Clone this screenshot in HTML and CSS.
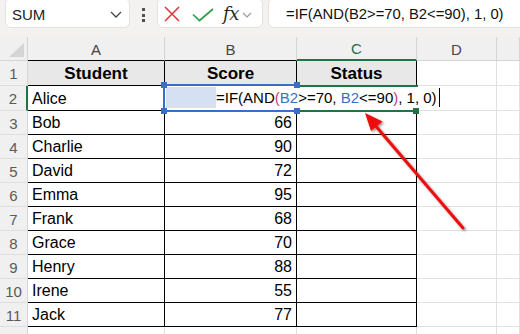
FILE: index.html
```html
<!DOCTYPE html>
<html>
<head>
<meta charset="utf-8">
<link rel="stylesheet" href="styles.css">
</head>
<body>
<div class="app">
  <div class="bar">
    <div class="namebox">
      <span class="name">SUM</span>
      <svg class="chev" width="12" height="7" viewBox="0 0 12 7"><path d="M1 1 L6 6 L11 1" fill="none" stroke="#444" stroke-width="1.3"/></svg>
    </div>
    <div class="dots"><i></i><i></i><i></i></div>
    <div class="fxbox">
      <svg class="ico-x" width="16" height="16" viewBox="0 0 16 16"><path d="M1 1 L15 15 M15 1 L1 15" stroke="#e0393e" stroke-width="1.6" fill="none"/></svg>
      <svg class="ico-ok" width="22" height="14" viewBox="0 0 22 14"><path d="M1 6.5 L7.5 12.5 L21 1" stroke="#2e9e4b" stroke-width="1.7" fill="none"/></svg>
      <span class="fx">fx</span>
      <svg class="ico-dd" width="10" height="6" viewBox="0 0 10 6"><path d="M1 1 L5 5 L9 1" stroke="#9a9a9a" stroke-width="1.2" fill="none"/></svg>
    </div>
    <div class="formula">=IF(AND(B2&gt;=70, B2&lt;=90), 1, 0)</div>
  </div>

  <div class="sheet">
    <div class="grid">
      <div class="ch corner"><span class="tri"></span></div>
      <div class="ch dk">A</div>
      <div class="ch dk">B</div>
      <div class="ch sel">C</div>
      <div class="ch">D</div>
      <div class="ch"></div>

      <div class="rh">1</div>
      <div class="c t hd">Student</div>
      <div class="c t hd">Score</div>
      <div class="c t hd">Status</div>
      <div class="c g"></div>
      <div class="c g"></div>

      <div class="rh act">2</div>
      <div class="c t">Alice</div>
      <div class="c t num"></div>
      <div class="c t"></div>
      <div class="c g"></div>
      <div class="c g"></div>

      <div class="rh">3</div>
      <div class="c t">Bob</div>
      <div class="c t num">66</div>
      <div class="c t"></div>
      <div class="c g"></div>
      <div class="c g"></div>

      <div class="rh">4</div>
      <div class="c t">Charlie</div>
      <div class="c t num">90</div>
      <div class="c t"></div>
      <div class="c g"></div>
      <div class="c g"></div>

      <div class="rh">5</div>
      <div class="c t">David</div>
      <div class="c t num">72</div>
      <div class="c t"></div>
      <div class="c g"></div>
      <div class="c g"></div>

      <div class="rh">6</div>
      <div class="c t">Emma</div>
      <div class="c t num">95</div>
      <div class="c t"></div>
      <div class="c g"></div>
      <div class="c g"></div>

      <div class="rh">7</div>
      <div class="c t">Frank</div>
      <div class="c t num">68</div>
      <div class="c t"></div>
      <div class="c g"></div>
      <div class="c g"></div>

      <div class="rh">8</div>
      <div class="c t">Grace</div>
      <div class="c t num">70</div>
      <div class="c t"></div>
      <div class="c g"></div>
      <div class="c g"></div>

      <div class="rh">9</div>
      <div class="c t">Henry</div>
      <div class="c t num">88</div>
      <div class="c t"></div>
      <div class="c g"></div>
      <div class="c g"></div>

      <div class="rh">10</div>
      <div class="c t">Irene</div>
      <div class="c t num">55</div>
      <div class="c t"></div>
      <div class="c g"></div>
      <div class="c g"></div>

      <div class="rh">11</div>
      <div class="c t">Jack</div>
      <div class="c t num">77</div>
      <div class="c t"></div>
      <div class="c g"></div>
      <div class="c g"></div>

      <div class="rh">12</div>
      <div class="c g"></div>
      <div class="c g"></div>
      <div class="c g"></div>
      <div class="c g"></div>
      <div class="c g"></div>
    </div>

    <div class="edit">
      <div class="refbox"></div>
      <div class="reffill"></div>
      <div class="gline top"></div>
      <div class="gline bottom"></div>
      <div class="etext">=IF(AND<span class="p1">(</span><span class="r1">B2</span>&gt;=70, <span class="r1">B2</span>&lt;=90<span class="p1">)</span>, 1, 0)<span class="caret"></span></div>
      <i class="h hb tl"></i><i class="h hb bl"></i><i class="h hb tr"></i><i class="h hb br"></i>
      <i class="h hg"></i>
    </div>

    <svg class="arrow" width="520" height="297" viewBox="0 37 520 297">
      <defs>
        <filter id="sh" x="-20%" y="-20%" width="140%" height="140%">
          <feDropShadow dx="1.5" dy="1.5" stdDeviation="1" flood-color="#000" flood-opacity="0.45"/>
        </filter>
      </defs>
      <g filter="url(#sh)">
        <line x1="463" y1="228" x2="374" y2="124" stroke="#ee1111" stroke-width="3" stroke-linecap="round"/>
        <polygon points="365,113 382.5,121.5 371,131" fill="#ee1111"/>
      </g>
    </svg>
  </div>
</div>
</body>
</html>
```

FILE: styles.css
```css
* { box-sizing: border-box; }
html, body {
  margin: 0;
  padding: 0;
  background: #f3f2f1;
  overflow: hidden;
}
.app {
  width: 520px;
  height: 334px;
  font-family: "Liberation Sans", Arial, sans-serif;
  color: #000;
  overflow: hidden;
  background: #f3f2f1;
}

/* ---------- formula bar ---------- */
.bar {
  display: flex;
  align-items: flex-start;
  height: 28px;
  padding-left: 5px;
}
.namebox {
  width: 125px;
  height: 30px;
  margin-top: -2px;
  background: #fff;
  border: 1px solid #e2e2e2;
  border-radius: 6px;
  display: flex;
  align-items: center;
  justify-content: space-between;
  padding: 2px 7px 0 6px;
}
.name {
  font-size: 15px;
  color: #222;
}
.chev { margin-top: 1px; }
.dots {
  width: 27px;
  height: 28px;
  display: flex;
  flex-direction: column;
  align-items: center;
  justify-content: center;
  gap: 2.5px;
  padding-top: 2px;
}
.dots i {
  display: block;
  width: 3px;
  height: 3px;
  background: #505050;
}
.fxbox {
  width: 106px;
  height: 30px;
  margin-top: -2px;
  background: #fff;
  border: 1px solid #e2e2e2;
  border-radius: 6px;
  display: flex;
  align-items: center;
  padding: 2px 0 0 6px;
}
.ico-x { margin-right: 12px; }
.ico-ok { margin-right: 9px; margin-top: 1px; }
.fx {
  font-family: "DejaVu Serif", "Liberation Serif", serif;
  font-style: italic;
  font-size: 18px;
  color: #2b2b2b;
  letter-spacing: -0.5px;
  margin-right: 3px;
  margin-top: -2px;
}
.ico-dd { margin-top: 2px; }
.formula {
  flex: 1;
  height: 30px;
  margin-top: -2px;
  margin-left: 5px;
  margin-right: -12px;
  background: #fff;
  border: 1px solid #e2e2e2;
  border-radius: 6px;
  padding: 3px 0 0 17px;
  font-size: 14.8px;
  line-height: 24px;
  color: #111;
  white-space: nowrap;
}

/* ---------- sheet ---------- */
.sheet {
  position: relative;
  margin-top: 9px;
  background: #fff;
}
.grid {
  display: grid;
  grid-template-columns: 28px 137px 132px 120px 80px 1fr;
  grid-template-rows: 24px 25px 25px repeat(10, 24px);
}
.ch {
  background: #f0f0f0;
  border-right: 1px solid #d5d5d5;
  border-bottom: 1px solid #d5d5d5;
  font-size: 15px;
  color: #454545;
  display: flex;
  align-items: center;
  justify-content: center;
  padding-top: 1px;
}
.ch.dk { border-bottom-color: #000; }
.ch.sel {
  color: #1e7145;
  border-bottom: 2px solid #217346;
}
.corner { position: relative; }
.tri {
  position: absolute;
  right: 3px;
  bottom: 3px;
  width: 0;
  height: 0;
  border-left: 15px solid transparent;
  border-bottom: 14px solid #d5d5d5;
}
.rh {
  background: #f0f0f0;
  border-right: 1px solid #d5d5d5;
  border-bottom: 1px solid #dedede;
  font-size: 15px;
  color: #5a5a5a;
  display: flex;
  align-items: center;
  justify-content: center;
  padding-top: 1px;
}
.rh.act { border-right: 2px solid #217346; }
.c {
  font-size: 16px;
  display: flex;
  align-items: center;
  padding: 1px 4px 0 4px;
  white-space: nowrap;
  overflow: hidden;
}
.c.t {
  border-right: 1px solid #000;
  border-bottom: 1px solid #000;
  background: #fff;
}
.c.g {
  border-right: 1px solid #e0e0e0;
  border-bottom: 1px solid #e0e0e0;
}
.c.hd {
  background: #e8e8e8;
  font-weight: bold;
  font-size: 17px;
  justify-content: center;
}
.c.num { justify-content: flex-end; }

/* ---------- in-cell editing overlay ---------- */
.edit {
  position: absolute;
  left: 0;
  top: 0;
  width: 520px;
  height: 100px;
  pointer-events: none;
}
.refbox {
  position: absolute;
  left: 163px;
  top: 47px;
  width: 135px;
  height: 28px;
  border: 2px solid #3a6fc7;
}
.reffill {
  position: absolute;
  left: 166px;
  top: 50px;
  width: 50px;
  height: 21px;
  background: #d6e0f3;
}
.gline {
  position: absolute;
  left: 298px;
  width: 120px;
  height: 2px;
  background: #217346;
}
.gline.top { top: 48px; }
.gline.bottom { top: 73px; }
.etext {
  position: absolute;
  left: 216px;
  top: 50px;
  height: 22px;
  width: 230px;
  background: #fff;
  font-size: 15px;
  line-height: 22px;
  color: #000;
  white-space: nowrap;
}
.p1 { color: #c2407e; }
.r1 { color: #3a6fc7; }
.caret {
  display: inline-block;
  width: 1px;
  height: 19px;
  background: #000;
  vertical-align: -4px;
  margin-left: 2px;
}
.h {
  position: absolute;
  width: 6px;
  height: 6px;
}
.hb { background: #3a6fc7; }
.hg { background: #217346; left: 413px; top: 71px; }
.tl { left: 161px; top: 45px; }
.bl { left: 161px; top: 71px; }
.tr { left: 294px; top: 45px; }
.br { left: 294px; top: 71px; }

/* ---------- annotation arrow ---------- */
.arrow {
  position: absolute;
  left: 0;
  top: 0;
  pointer-events: none;
}
```
